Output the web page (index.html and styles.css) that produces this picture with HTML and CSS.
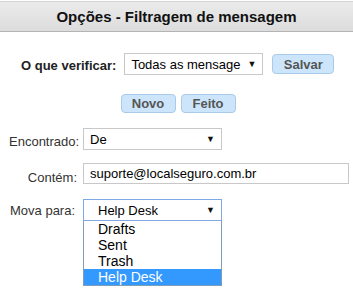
FILE: index.html
```html
<!DOCTYPE html>
<html lang="pt">
<head>
    <meta charset="UTF-8">
    <title>Opções - Filtragem de mensagem</title>
    <link rel="stylesheet" href="styles.css">
</head>
<body>
<div class="header">Opções - Filtragem de mensagem</div>

<div class="check-row">
    <span class="check-label">O que verificar:</span>
    <div class="select wide"><span class="select-text">Todas as mensage</span><span class="arrow">▼</span></div>
    <button class="btn">Salvar</button>
</div>

<div class="actions">
    <button class="btn small">Novo</button>
    <button class="btn small">Feito</button>
</div>

<div class="filter-form">
    <label class="lbl lbl-found">Encontrado:</label>
    <div class="select"><span class="select-text">De</span><span class="arrow">▼</span></div>

    <label class="lbl lbl-contains">Contém:</label>
    <div class="text-input">suporte@localseguro.com.br</div>

    <label class="lbl lbl-move">Mova para:</label>
    <div class="select-wrap">
        <div class="select focused"><span class="select-text indent">Help Desk</span><span class="arrow">▼</span></div>
        <ul class="dropdown">
            <li>Drafts</li>
            <li>Sent</li>
            <li>Trash</li>
            <li class="selected">Help Desk</li>
        </ul>
    </div>
</div>
</body>
</html>
```

FILE: styles.css
```css
body {
    margin: 0;
    font-family: 'Liberation Sans', Arial, sans-serif;
    font-size: 13px;
    color: #222;
    background: #fff;
}
.header {
    height: 29px;
    line-height: 29px;
    margin-top: 1px;
    border-top: 1px solid #d4d4d4;
    border-bottom: 1px solid #b4b4b4;
    background: linear-gradient(#ebebeb, #dcdcdc);
    text-align: center;
    font-weight: bold;
    font-size: 15px;
    color: #111;
}
.check-row {
    display: flex;
    align-items: center;
    margin-top: 21px;
    padding-left: 21px;
}
.check-label {
    font-weight: bold;
    margin-right: 8px;
    margin-top: 3px;
}
.select {
    box-sizing: border-box;
    width: 139px;
    height: 22px;
    border: 1px solid #c8c8c8;
    display: flex;
    align-items: center;
    justify-content: space-between;
    padding: 0 6px 0 6px;
    overflow: hidden;
    background: #fff;
    color: #000;
}
.select-text {
    white-space: nowrap;
    overflow: hidden;
}
.select.wide .select-text {
    width: 112px;
}
.select-text.indent {
    padding-left: 8px;
}
.arrow {
    font-size: 9px;
    color: #111;
}
.btn {
    font-family: 'Liberation Sans', Arial, sans-serif;
    font-weight: bold;
    font-size: 13px;
    color: #555;
    background: #cde5fb;
    border: 1px solid #a8cbe9;
    border-radius: 4px;
    height: 20px;
    padding: 0;
    width: 62px;
    margin-left: 9px;
}
.actions {
    display: flex;
    justify-content: center;
    gap: 5px;
    margin-top: 19px;
    padding-left: 3px;
}
.btn.small {
    width: 55px;
    height: 19px;
    margin: 0;
}
.filter-form {
    display: grid;
    grid-template-columns: 83px auto;
    align-items: start;
    row-gap: 13px;
    margin-top: 15px;
}
.lbl {
    color: #333;
}
.lbl-found {
    padding-left: 9px;
    padding-top: 6px;
}
.lbl-contains {
    text-align: right;
    padding-right: 6px;
    padding-top: 7px;
}
.lbl-move {
    padding-left: 10px;
    padding-top: 4px;
}
.text-input {
    box-sizing: border-box;
    width: 266px;
    height: 21px;
    margin-bottom: 2px;
    border: 1px solid #c8c8c8;
    padding: 2px 6px;
    color: #000;
}
.select.focused {
    border-color: #7fa9e6;
}
.dropdown {
    width: 139px;
    box-sizing: border-box;
    margin: 0;
    padding: 0;
    list-style: none;
    border: 1px solid #7f9db9;
    border-top: none;
    background: #fff;
    color: #000;
}
.dropdown li {
    height: 16px;
    line-height: 16px;
    padding-left: 14px;
    font-size: 14px;
}
.dropdown li.selected {
    background: #3399ff;
    color: #fff;
}
```
